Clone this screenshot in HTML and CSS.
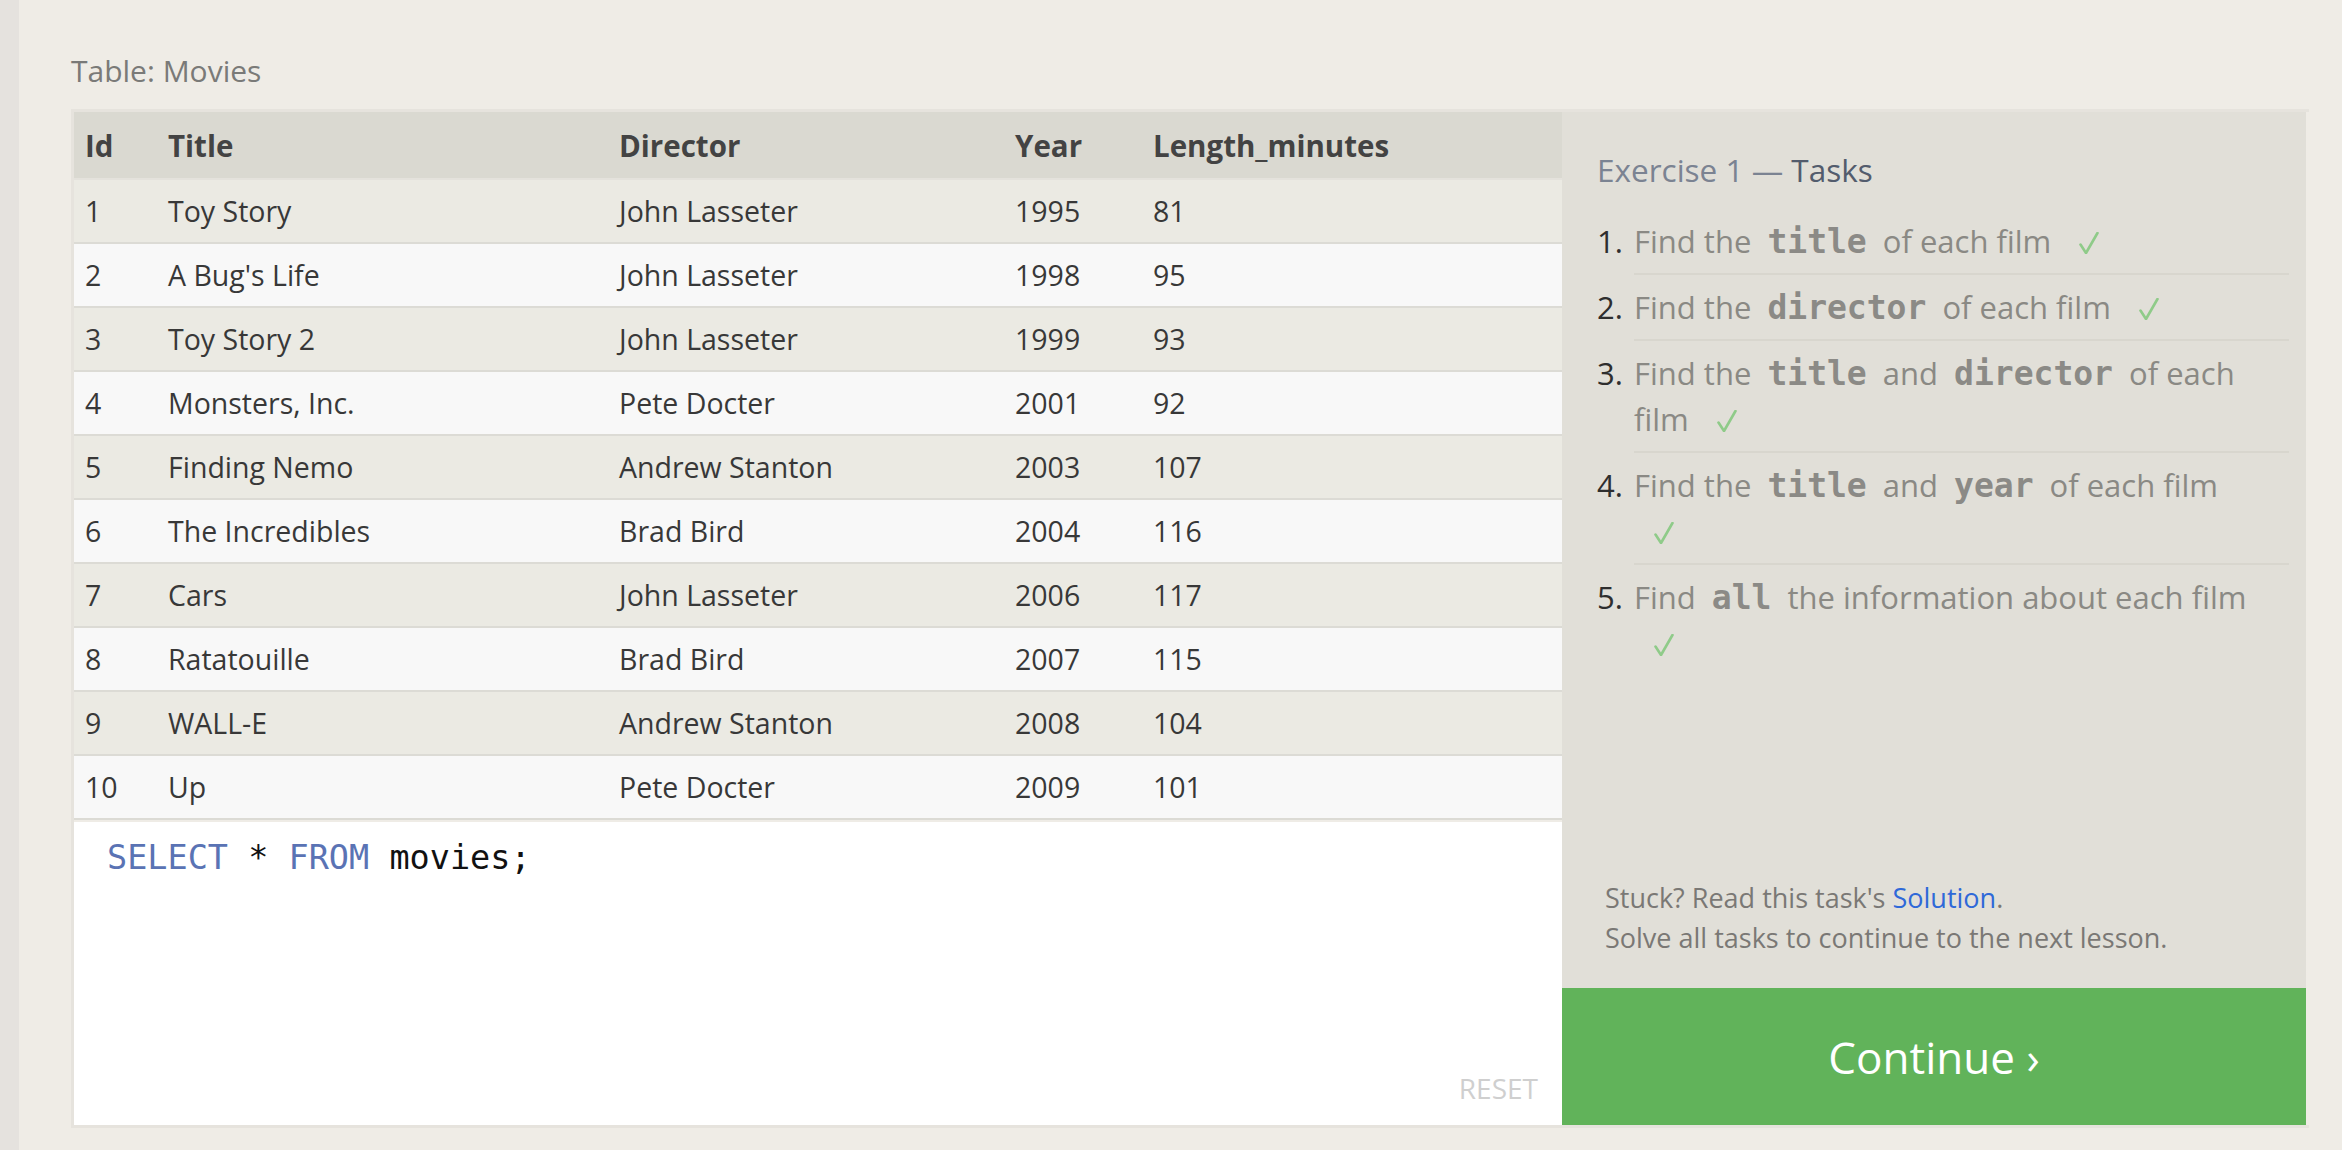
FILE: index.html
```html
<!DOCTYPE html>
<html lang="en">
<head>
<meta charset="utf-8">
<title>SQLBolt - Exercise 1</title>
<link rel="stylesheet" href="styles.css">
</head>
<body>
<div class="page">
  <div class="rail"></div>
  <main class="main">
    <div class="caption">Table: Movies</div>
    <div class="frame">
      <section class="left">
        <table class="movies">
          <colgroup>
            <col class="c-id"><col class="c-title"><col class="c-dir"><col class="c-year"><col>
          </colgroup>
          <thead>
            <tr><th>Id</th><th>Title</th><th>Director</th><th>Year</th><th>Length_minutes</th></tr>
          </thead>
          <tbody>
            <tr><td>1</td><td>Toy Story</td><td>John Lasseter</td><td>1995</td><td>81</td></tr>
            <tr><td>2</td><td>A Bug's Life</td><td>John Lasseter</td><td>1998</td><td>95</td></tr>
            <tr><td>3</td><td>Toy Story 2</td><td>John Lasseter</td><td>1999</td><td>93</td></tr>
            <tr><td>4</td><td>Monsters, Inc.</td><td>Pete Docter</td><td>2001</td><td>92</td></tr>
            <tr><td>5</td><td>Finding Nemo</td><td>Andrew Stanton</td><td>2003</td><td>107</td></tr>
            <tr><td>6</td><td>The Incredibles</td><td>Brad Bird</td><td>2004</td><td>116</td></tr>
            <tr><td>7</td><td>Cars</td><td>John Lasseter</td><td>2006</td><td>117</td></tr>
            <tr><td>8</td><td>Ratatouille</td><td>Brad Bird</td><td>2007</td><td>115</td></tr>
            <tr><td>9</td><td>WALL-E</td><td>Andrew Stanton</td><td>2008</td><td>104</td></tr>
            <tr><td>10</td><td>Up</td><td>Pete Docter</td><td>2009</td><td>101</td></tr>
          </tbody>
        </table>
        <div class="editor">
          <pre class="code"><span class="kw">SELECT</span> * <span class="kw">FROM</span> movies;</pre>
          <div class="reset">RESET</div>
        </div>
      </section>
      <aside class="panel">
        <h2 class="ex-title">Exercise 1 — <span class="ex-tasks">Tasks</span></h2>
        <ol class="tasks">
          <li><span class="num">1.</span><span class="txt">Find the <code>title</code> of each film <svg class="check" viewBox="0 0 20 22" aria-label="done"><path d="M1.5 12.5 L7 21 L18.5 1"/></svg></span></li>
          <li><span class="num">2.</span><span class="txt">Find the <code>director</code> of each film <svg class="check" viewBox="0 0 20 22" aria-label="done"><path d="M1.5 12.5 L7 21 L18.5 1"/></svg></span></li>
          <li><span class="num">3.</span><span class="txt">Find the <code>title</code> and <code>director</code> of each <span class="word">film</span> <svg class="check" viewBox="0 0 20 22" aria-label="done"><path d="M1.5 12.5 L7 21 L18.5 1"/></svg></span></li>
          <li><span class="num">4.</span><span class="txt">Find the <code>title</code> and <code>year</code> of each film <svg class="check" viewBox="0 0 20 22" aria-label="done"><path d="M1.5 12.5 L7 21 L18.5 1"/></svg></span></li>
          <li class="last"><span class="num">5.</span><span class="txt">Find <code>all</code> the information about each film <svg class="check" viewBox="0 0 20 22" aria-label="done"><path d="M1.5 12.5 L7 21 L18.5 1"/></svg></span></li>
        </ol>
        <p class="stuck">Stuck? Read this task's <a class="solution" href="#">Solution</a>.<br>Solve all tasks to continue to the next lesson.</p>
        <button class="continue">Continue ›</button>
      </aside>
    </div>
  </main>
</div>
</body>
</html>
```

FILE: styles.css
```css
html, body {
  margin: 0;
  padding: 0;
}

body {
  background: #efece6;
  font-family: "Open Sans", "Noto Sans", "Liberation Sans", sans-serif;
  color: #3a3a3a;
}

.page {
  display: flex;
  min-height: 1150px;
}

.rail {
  width: 19px;
  flex: none;
  background: #e5e2de;
}

.main {
  flex: 1;
  padding: 51px 0 0 52px;
}

.caption {
  font-size: 30px;
  line-height: 40px;
  color: #7a7a78;
  margin-bottom: 18px;
}

.frame {
  display: flex;
  width: 2235px;
  height: 1013px;
  border: 3px solid #e6e3dd;
  border-right: 0;
}

.left {
  width: 1488px;
  flex: none;
  display: flex;
  flex-direction: column;
}

.movies {
  width: 1488px;
  border-collapse: collapse;
  table-layout: fixed;
  font-size: 28.5px;
}

.c-id { width: 83px; }
.c-title { width: 451px; }
.c-dir { width: 396px; }
.c-year { width: 138px; }

.movies th,
.movies td {
  text-align: left;
  padding: 0 0 0 11px;
  vertical-align: middle;
  white-space: nowrap;
}

.movies th {
  height: 66px;
  background: #dad9d1;
  font-weight: 700;
  font-size: 29.5px;
  color: #434343;
  border-bottom: 2px solid #e4e2dc;
}

.movies td {
  height: 62px;
  color: #383838;
  border-bottom: 2px solid #dcdbd5;
}

.movies tbody tr:nth-child(odd) td {
  background: #ebeae3;
}

.movies tbody tr:nth-child(even) td {
  background: #f8f8f8;
}

.editor {
  flex: 1;
  margin-top: 2px;
  background: #ffffff;
  display: flex;
  flex-direction: column;
  justify-content: space-between;
  padding: 16px 24px 18px 33px;
}

.code {
  margin: 0;
  font-family: "DejaVu Sans Mono", "Liberation Mono", monospace;
  font-size: 33.5px;
  line-height: 40px;
  color: #111111;
}

.kw {
  color: #5a73b4;
}

.reset {
  align-self: flex-end;
  font-size: 28px;
  line-height: 37px;
  color: #cfcfcf;
}

.panel {
  width: 744px;
  flex: none;
  background: #e1dfd8;
  display: flex;
  flex-direction: column;
  padding-top: 37px;
  box-sizing: border-box;
}

.ex-title {
  margin: 0 17px 18px 35px;
  font-size: 31.5px;
  line-height: 42px;
  font-weight: 400;
  color: #7b8392;
}

.ex-tasks {
  color: #535c6d;
}

.tasks {
  list-style: none;
  margin: 0 17px 0 35px;
  padding: 0;
  font-size: 31px;
  line-height: 46px;
}

.tasks li {
  display: flex;
}

.num {
  width: 37px;
  flex: none;
  color: #2e2e2e;
  padding: 9px 0;
}

.txt {
  flex: 1;
  padding: 9px 35px 9px 0;
  color: #8a8984;
  border-bottom: 2px solid #d8d6ce;
}

.tasks li.last .txt {
  border-bottom: 0;
}

.word {
  display: inline-block;
}

.txt code {
  font-family: "DejaVu Sans Mono", "Liberation Mono", monospace;
  font-weight: 700;
  font-size: 33px;
  line-height: 1;
  color: #8b8a86;
  padding: 0 8px;
}

.check {
  display: inline-block;
  width: 20px;
  height: 22px;
  margin-left: 20px;
  vertical-align: -1px;
  fill: none;
  stroke: #8fcb89;
  stroke-width: 2.6;
  stroke-linecap: round;
  stroke-linejoin: round;
}

.stuck {
  margin: auto 17px 30px 43px;
  font-size: 27px;
  line-height: 40px;
  color: #7a7875;
}

.solution {
  color: #2f69d8;
  text-decoration: none;
}

.continue {
  display: flex;
  align-items: center;
  justify-content: center;
  flex: none;
  height: 137px;
  width: 100%;
  border: 0;
  margin: 0;
  padding: 0;
  background: #61b35a;
  color: #ffffff;
  font-family: "Open Sans", "Noto Sans", sans-serif;
  font-size: 44px;
  cursor: pointer;
}
```
